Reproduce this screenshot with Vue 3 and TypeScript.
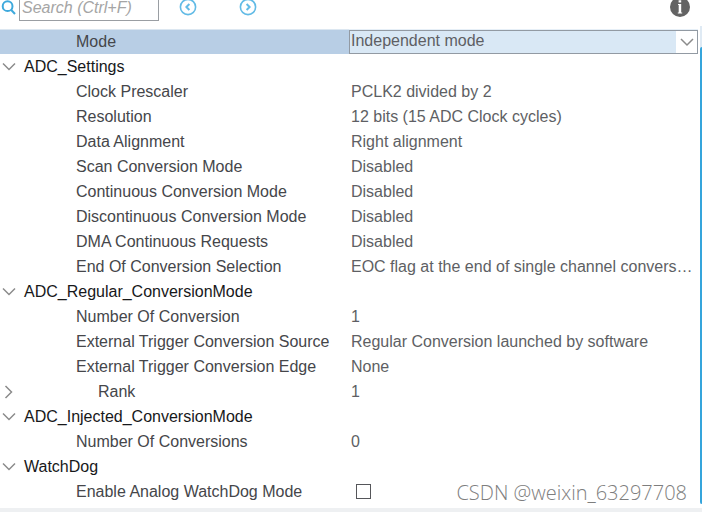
<script setup lang="ts">
import { computed, ref } from 'vue'

interface Param {
  name: string
  value: string
  kind?: 'select' | 'check' | 'nested'
}
interface Group {
  title: string
  params: Param[]
}

const query = ref('')
const mode = ref('Independent mode')
const watchdog = ref(false)
const rankOpen = ref(false)
const collapsed = ref<Record<string, boolean>>({})

const groups: Group[] = [
  { title: '', params: [{ name: 'Mode', value: 'Independent mode', kind: 'select' }] },
  {
    title: 'ADC_Settings',
    params: [
      { name: 'Clock Prescaler', value: 'PCLK2 divided by 2' },
      { name: 'Resolution', value: '12 bits (15 ADC Clock cycles)' },
      { name: 'Data Alignment', value: 'Right alignment' },
      { name: 'Scan Conversion Mode', value: 'Disabled' },
      { name: 'Continuous Conversion Mode', value: 'Disabled' },
      { name: 'Discontinuous Conversion Mode', value: 'Disabled' },
      { name: 'DMA Continuous Requests', value: 'Disabled' },
      { name: 'End Of Conversion Selection', value: 'EOC flag at the end of single channel conversion' },
    ],
  },
  {
    title: 'ADC_Regular_ConversionMode',
    params: [
      { name: 'Number Of Conversion', value: '1' },
      { name: 'External Trigger Conversion Source', value: 'Regular Conversion launched by software' },
      { name: 'External Trigger Conversion Edge', value: 'None' },
      { name: 'Rank', value: '1', kind: 'nested' },
    ],
  },
  { title: 'ADC_Injected_ConversionMode', params: [{ name: 'Number Of Conversions', value: '0' }] },
  { title: 'WatchDog', params: [{ name: 'Enable Analog WatchDog Mode', value: '', kind: 'check' }] },
]

const visible = computed(() => {
  const q = query.value.toLowerCase()
  return groups
    .map((g) => ({ ...g, params: g.params.filter((p) => p.name.toLowerCase().includes(q)) }))
    .filter((g) => g.params.length > 0)
})

function toggle(title: string) {
  collapsed.value[title] = !collapsed.value[title]
}
</script>

<template>
  <div class="panel">
    <header class="toolbar">
      <label class="search">
        <svg class="lens" viewBox="0 0 16 16" aria-hidden="true">
          <circle cx="7.6" cy="6.2" r="4.9" />
          <path d="M11 9.8 15 14" />
        </svg>
        <input v-model="query" type="text" placeholder="Search (Ctrl+F)" aria-label="Search" />
      </label>
      <nav class="steps">
        <button type="button" aria-label="Previous match">
          <svg viewBox="0 0 18 18"><circle cx="9" cy="9" r="7.6" /><path class="bold" d="M10.4 6 7.4 9l3 3" /></svg>
        </button>
        <button type="button" aria-label="Next match">
          <svg viewBox="0 0 18 18"><circle cx="9" cy="9" r="7.6" /><path class="bold" d="M7.6 6 10.6 9l-3 3" /></svg>
        </button>
      </nav>
      <button type="button" class="info" aria-label="Information">
        <svg viewBox="0 0 20 20">
          <circle cx="10" cy="10" r="10" fill="#636363" />
          <path d="M8.6 3.2h2.6v2.2H8.6zM8 7h3.2v8.4h1v1H7.8v-1h.9V8H8z" fill="#fff" />
        </svg>
      </button>
    </header>

    <main class="content">
      <table>
        <colgroup>
          <col class="name-col" />
          <col />
        </colgroup>
        <tbody v-for="g in visible" :key="g.title">
          <tr v-if="g.title">
            <th colspan="2" scope="rowgroup">
              <button type="button" class="group" :aria-expanded="!collapsed[g.title]" @click="toggle(g.title)">
                <svg class="chevron" :class="{ closed: collapsed[g.title] }" viewBox="0 0 14 14">
                  <path d="M1 3.5 7 9.5 13 3.5" />
                </svg>
                {{ g.title }}
              </button>
            </th>
          </tr>
          <template v-if="!collapsed[g.title]">
            <tr v-for="p in g.params" :key="p.name" :class="{ selected: p.kind === 'select' }">
              <td v-if="p.kind === 'nested'" class="nested">
                <button type="button" class="group" :aria-expanded="rankOpen" @click="rankOpen = !rankOpen">
                  <svg class="chevron" :class="{ closed: !rankOpen }" viewBox="0 0 14 14">
                    <path d="M1 3.5 7 9.5 13 3.5" />
                  </svg>
                  <span>{{ p.name }}</span>
                </button>
              </td>
              <td v-else class="name">
                <label v-if="p.kind === 'select'" for="mode">{{ p.name }}</label>
                <label v-else-if="p.kind === 'check'" for="watchdog">{{ p.name }}</label>
                <template v-else>{{ p.name }}</template>
              </td>
              <td v-if="p.kind === 'select'" class="editor">
                <div class="combo">
                  <select id="mode" v-model="mode">
                    <option>Independent mode</option>
                  </select>
                  <svg class="arrow" viewBox="0 0 21 21" aria-hidden="true"><path d="M5 7.5 11 13.5 17 7.5" /></svg>
                </div>
              </td>
              <td v-else-if="p.kind === 'check'" class="value">
                <input id="watchdog" v-model="watchdog" type="checkbox" />
              </td>
              <td v-else class="value">{{ p.value }}</td>
            </tr>
          </template>
        </tbody>
      </table>
      <div class="track"><div class="thumb"></div></div>
    </main>
    <footer class="edge"></footer>
    <p class="watermark">CSDN @weixin_63297708</p>
  </div>
</template>

<style>
body {
  background: #fff;
}
</style>

<style scoped>
.panel {
  position: relative;
  min-height: 100vh;
  display: flex;
  flex-direction: column;
  overflow: hidden;
  font: 16px/24px "Liberation Sans", Arial, sans-serif;
  color: #45464a;
}
button {
  padding: 0;
  border: 0;
  background: none;
  font: inherit;
  color: inherit;
  cursor: pointer;
}
svg {
  display: block;
  fill: none;
}
.toolbar {
  display: flex;
  align-items: flex-start;
  height: 29px;
  padding-right: 12px;
}
.search {
  display: flex;
}
.lens {
  width: 16px;
  height: 16px;
  margin-right: 3px;
  stroke: #3ea9dc;
  stroke-width: 2;
}
.search input {
  box-sizing: border-box;
  width: 140px;
  height: 21px;
  padding: 0 2px 4px;
  border: solid #9a9ea3;
  border-width: 0 1px 1px;
  outline: 0;
  background: #fff;
  font: inherit;
  font-style: italic;
  color: #45464a;
}
.search input::placeholder {
  color: #a5a5a5;
  opacity: 1;
}
.steps {
  display: flex;
  gap: 42px;
  margin-left: 20px;
}
.steps button {
  height: 16px;
}
.steps svg {
  width: 18px;
  height: 18px;
  margin-top: -2px;
  stroke: #62bbe6;
  stroke-width: 1.6;
}
.steps .bold {
  stroke-width: 2;
}
.info {
  margin: -3px 0 0 auto;
}
.info svg {
  width: 20px;
  height: 20px;
}
.content {
  display: flex;
  align-items: stretch;
  gap: 2px;
}
table {
  flex: 1;
  min-width: 0;
  width: 100%;
  table-layout: fixed;
  border-collapse: collapse;
}
.name-col {
  width: 349px;
}
tr {
  height: 25px;
}
th,
td {
  height: 25px;
  padding: 0;
  font-weight: 400;
  text-align: left;
  line-height: 25px;
  white-space: nowrap;
}
th {
  color: #17181a;
}
.name {
  padding-left: 76px;
}
.value {
  padding-left: 2px;
  padding-right: 3px;
  overflow: hidden;
  text-overflow: ellipsis;
  color: #5e5f64;
}
.selected .name {
  background: #b8cee5;
  box-shadow: inset 0 1px #dce7f1;
}
.editor {
  background: #e6eff7;
}
.group {
  display: flex;
  align-items: center;
  gap: 8px;
  padding-left: 2px;
  line-height: 25px;
}
.nested span {
  padding-left: 74px;
}
.chevron {
  width: 14px;
  height: 14px;
  stroke: #8b8b8b;
  stroke-width: 1.5;
}
.chevron.closed {
  transform: rotate(-90deg);
}
.combo {
  position: relative;
  display: flex;
  padding-top: 1px;
}
.combo select {
  box-sizing: border-box;
  width: 100%;
  height: 24px;
  padding: 0 24px 2px 1px;
  border: 1px solid #929aa3;
  border-radius: 0;
  appearance: none;
  background: #d9e8f5;
  font: inherit;
  line-height: 20px;
  color: #5e5f64;
}
.arrow {
  position: absolute;
  top: 2px;
  right: 1px;
  width: 21px;
  height: 22px;
  background: #fff;
  stroke: #8b8b8b;
  stroke-width: 1.5;
  pointer-events: none;
}
#watchdog {
  display: block;
  box-sizing: border-box;
  width: 15px;
  height: 15px;
  margin: 0 0 0 5px;
  appearance: none;
  border: 1px solid #55565a;
  background: #fff;
}
#watchdog:checked {
  background: #3ea9dc;
}
.track {
  width: 2px;
  padding-top: 21px;
  margin-top: -3px;
  display: flex;
  background: #dfeaf4;
}
.thumb {
  flex: 1;
  border-radius: 2px 0 0 2px;
  background: #35a5dc;
}
.edge {
  flex: 1;
  margin-top: 4px;
  background: #eef0f2;
}
.watermark {
  position: absolute;
  right: 15px;
  bottom: 7px;
  margin: 0;
  font: 300 20px/24px "Open Sans", "Liberation Sans", sans-serif;
  color: #7e7e7e;
  pointer-events: none;
}
</style>
